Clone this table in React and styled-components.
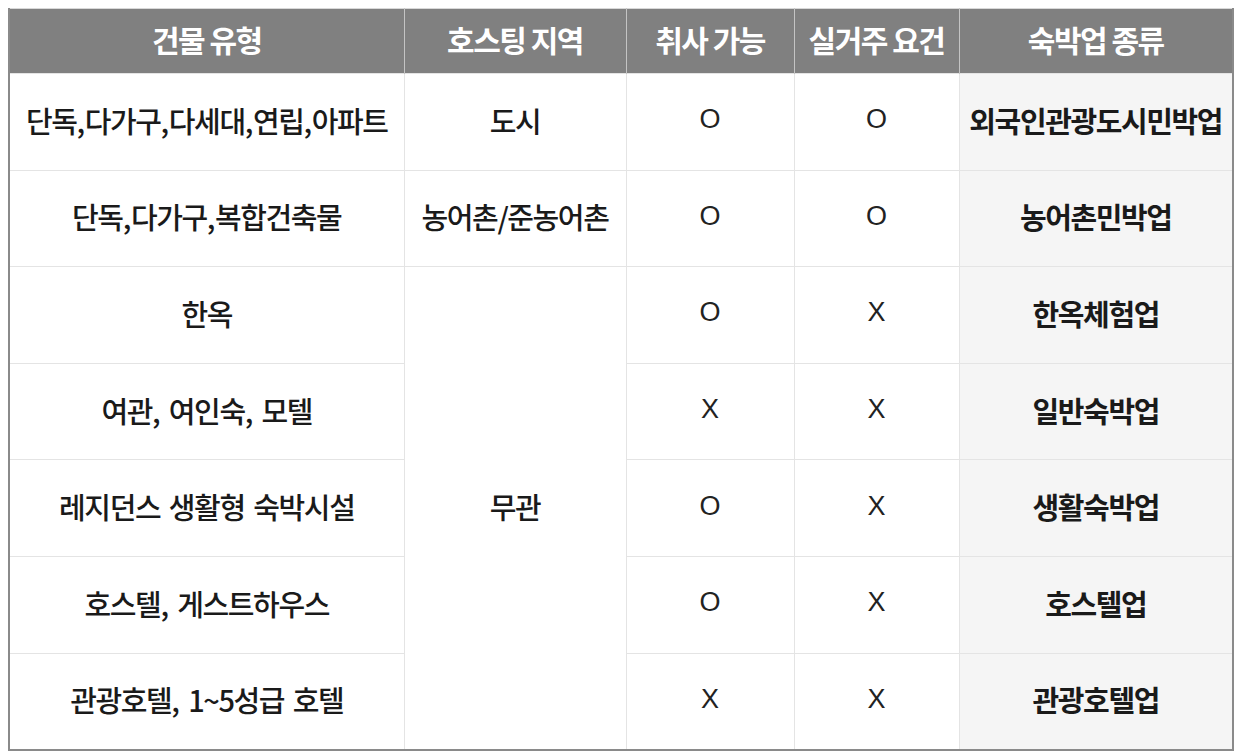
import React from 'react'
import styled, {createGlobalStyle} from 'styled-components'

const rows = [
    {type: '단독,다가구,다세대,연립,아파트', area: '도시', cook: 'O', live: 'O', kind: '외국인관광도시민박업'},
    {type: '단독,다가구,복합건축물', area: '농어촌/준농어촌', cook: 'O', live: 'O', kind: '농어촌민박업'},
    {type: '한옥', area: '무관', span: 5, cook: 'O', live: 'X', kind: '한옥체험업'},
    {type: '여관, 여인숙, 모텔', cook: 'X', live: 'X', kind: '일반숙박업'},
    {type: '레지던스 생활형 숙박시설', cook: 'O', live: 'X', kind: '생활숙박업'},
    {type: '호스텔, 게스트하우스', cook: 'O', live: 'X', kind: '호스텔업'},
    {type: '관광호텔, 1~5성급 호텔', cook: 'X', live: 'X', kind: '관광호텔업'},
]

// commas in the source table sit a little looser than the CJK font sets them
const withCommas = text => text.split(',').map((part, i, all) => (
    <React.Fragment key={i}>
        {part}
        {i < all.length - 1 && <Comma>,</Comma>}
    </React.Fragment>
))

const App = () => {
    return (
        <>
        <GlobalStyle />
        <Table>
            <colgroup>
                <col style={{width: 395}} />
                <col style={{width: 222}} />
                <col style={{width: 168}} />
                <col style={{width: 165}} />
                <col />
            </colgroup>
            <thead>
                <HeadRow>
                    <Th>건물 유형</Th>
                    <Th>호스팅 지역</Th>
                    <Th>취사 가능</Th>
                    <Th>실거주 요건</Th>
                    <Th>숙박업 종류</Th>
                </HeadRow>
            </thead>
            <tbody>
                {rows.map(row => (
                    <BodyRow key={row.kind}>
                        <Td>{withCommas(row.type)}</Td>
                        {row.area && <Td rowSpan={row.span || 1}>{row.area}</Td>}
                        <Mark>{row.cook}</Mark>
                        <Mark>{row.live}</Mark>
                        <Td $shaded>{row.kind}</Td>
                    </BodyRow>
                ))}
            </tbody>
        </Table>
        </>
    )
}

export default App

const GlobalStyle = createGlobalStyle`
body {
    margin: 8px 6px 0 8px;
    background: #fff;
    font-family: "Noto Sans CJK KR", "Noto Sans", sans-serif;
}
`
const Table = styled.table`
width: 1226px;
border-collapse: collapse;
table-layout: fixed;
border-top: 1px solid #d8d8d8;
border-left: 2px solid #8a8a8a;
border-right: 2px solid #8a8a8a;
border-bottom: 2px solid #8a8a8a;
`
const HeadRow = styled.tr`
height: 65px;
background: #808080;
`
const Th = styled.th`
color: #fff;
font-size: 30px;
font-weight: 700;
letter-spacing: -1.5px;
text-align: center;
border-left: 1px solid #c4c4c4;
padding: 0 0 4px;
&:first-child {
    border-left: none;
}
`
const BodyRow = styled.tr`
height: 96.6px;
`
const Td = styled.td`
padding: 0 0 4px;
text-align: center;
vertical-align: middle;
font-size: 29px;
font-weight: ${props => props.$shaded ? 700 : 500};
letter-spacing: -1.4px;
word-spacing: 3.5px;
color: #1a1a1a;
border: 1px solid #e4e4e4;
background: ${props => props.$shaded ? '#f5f5f5' : '#fff'};
white-space: nowrap;
`
const Comma = styled.span`
margin-right: 1px;
`
const Mark = styled(Td)`
font-family: "Liberation Sans", Arial, sans-serif;
font-weight: 400;
font-size: 27px;
letter-spacing: 0;
color: #222;
`
